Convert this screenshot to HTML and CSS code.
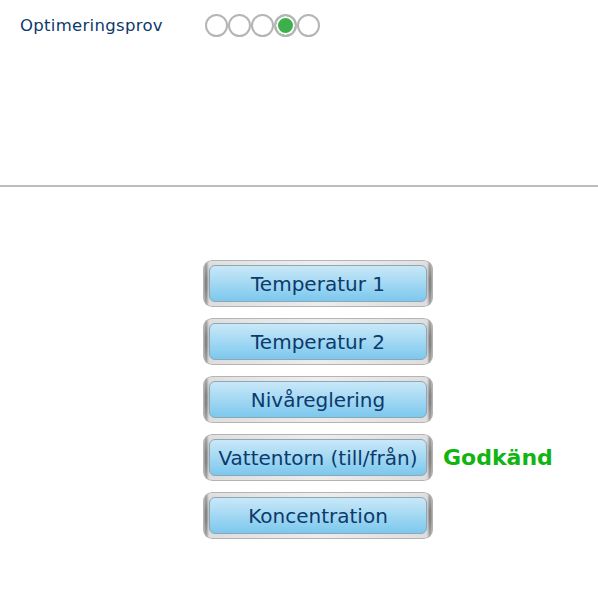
FILE: index.html
```html
<!DOCTYPE html>
<html lang="sv">
<head>
    <meta charset="UTF-8">
    <title>Optimeringsprov</title>
    <link rel="stylesheet" href="styles.css">
</head>
<body>
    <div class="header">
        <div class="title">Optimeringsprov</div>
        <div class="steps">
            <span class="step"></span>
            <span class="step"></span>
            <span class="step"></span>
            <span class="step active"></span>
            <span class="step"></span>
        </div>
    </div>

    <div class="tests">
        <div class="row">
            <div class="btn-frame"><button class="btn">Temperatur 1</button></div>
        </div>
        <div class="row">
            <div class="btn-frame"><button class="btn">Temperatur 2</button></div>
        </div>
        <div class="row">
            <div class="btn-frame"><button class="btn">Nivåreglering</button></div>
        </div>
        <div class="row">
            <div class="btn-frame"><button class="btn">Vattentorn (till/från)</button></div>
            <span class="status">Godkänd</span>
        </div>
        <div class="row">
            <div class="btn-frame"><button class="btn">Koncentration</button></div>
        </div>
    </div>
</body>
</html>
```

FILE: styles.css
```css
body {
    margin: 0;
    font-family: "DejaVu Sans", Verdana, sans-serif;
    background-color: #fff;
    color: #0d3a6b;
}

.header {
    display: flex;
    align-items: flex-start;
    height: 185px;
    padding: 0 20px;
    border-bottom: 2px solid #bdbdbd;
}

.title {
    width: 185px;
    font-size: 16.5px;
    letter-spacing: 0.3px;
    margin-top: 16px;
}

.steps {
    display: flex;
    margin-top: 14px;
}

.step {
    width: 19px;
    height: 19px;
    border: 2px solid #b5b5b5;
    border-radius: 50%;
    background-color: #fff;
}

.step.active {
    background-color: #3cb04a;
    box-shadow: inset 0 0 0 2px #fff;
}

.tests {
    display: flex;
    flex-direction: column;
    gap: 11px;
    padding: 73px 0 0 203px;
}

.row {
    display: flex;
    align-items: center;
    gap: 10px;
}

.btn-frame {
    width: 218px;
    height: 37px;
    padding: 5px 6px;
    border-radius: 9px;
    background:
        linear-gradient(rgba(255, 255, 255, 0.35), rgba(255, 255, 255, 0) 40%, rgba(255, 255, 255, 0) 60%, rgba(255, 255, 255, 0.3)),
        linear-gradient(to right, #c8c8c8 0, #767676 3px, #d2d2d2 6px, #e6e6e6 50%, #d2d2d2 calc(100% - 6px), #767676 calc(100% - 3px), #c8c8c8 100%);
    box-shadow: inset 0 0 0 1px #b4b4b4;
}

.btn {
    display: block;
    width: 100%;
    height: 100%;
    box-sizing: border-box;
    border: 1px solid #8fa6b3;
    border-radius: 6px;
    background: linear-gradient(#c9e8f8, #7cc8ee);
    color: #0d3a6b;
    font-family: inherit;
    font-size: 20px;
    padding: 1px 0 0;
    cursor: pointer;
}

.status {
    color: #11b511;
    font-weight: bold;
    font-size: 22px;
}
```
